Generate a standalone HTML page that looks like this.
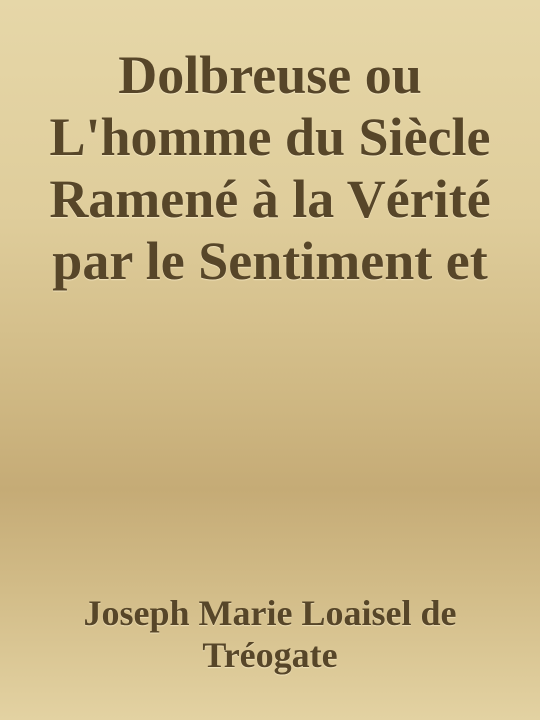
<!DOCTYPE html>
<html><head><meta charset="utf-8"><style>
html,body{margin:0;padding:0}
body{width:540px;height:720px;overflow:hidden;position:relative;
background:linear-gradient(to bottom,#e6d7a8 0%,#dfcd9b 30%,#cfb883 55%,#c5ab76 68%,#d2bc88 82%,#e3d2a2 100%);
font-family:"Liberation Serif",serif;font-weight:bold;color:#574629;text-align:center}
.t{position:absolute;left:0;width:540px;top:44px;font-size:54px;line-height:62px;text-shadow:0 1px 1px rgba(255,245,215,.6)}
.a{position:absolute;left:0;width:540px;top:592px;font-size:36px;line-height:42px;text-shadow:0 1px 1px rgba(255,245,215,.6)}
</style></head><body>
<div class="t">Dolbreuse ou<br>L'homme du Siècle<br>Ramené à la Vérité<br>par le Sentiment et</div>
<div class="a">Joseph Marie Loaisel de<br>Tréogate</div>
</body></html>
